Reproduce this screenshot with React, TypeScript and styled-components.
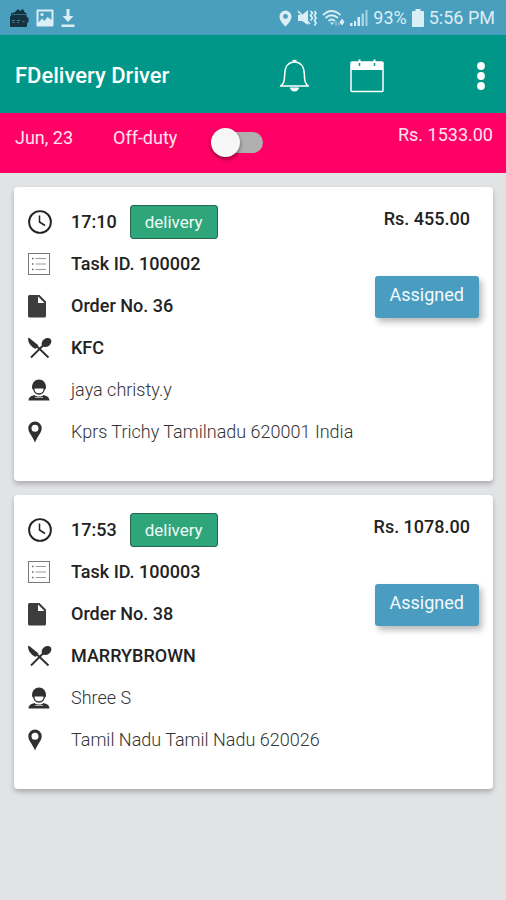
import React, { useState } from "react";
import styled, { createGlobalStyle } from "styled-components";

const GlobalStyle = createGlobalStyle`
  *, *::before, *::after { box-sizing: border-box; }
  html { background: #e2e3e5; }
  body { margin: 0; font-family: Roboto, "Liberation Sans", sans-serif; font-size: 18px; line-height: 24px; color: #222; }
  svg { display: block; flex: none; }
  button { font: inherit; border: 0; padding: 0; background: none; cursor: pointer; }
  h1, ul { margin: 0; padding: 0; }
`;

const Page = styled.div`
  display: flex;
  flex-direction: column;
  min-height: 100vh;
  background: #e2e3e5;
`;

const StatusBar = styled.div`
  display: flex;
  justify-content: space-between;
  align-items: center;
  height: 35px;
  padding: 1px 11px 0 9px;
  background: #4a9fbf;
  color: #dceef5;
`;

const StatusGroup = styled.div<{ $gap: number }>`
  display: flex;
  align-items: center;
  gap: ${(p) => p.$gap}px;
`;

const StatusText = styled.span`
  font-size: 18px;
  white-space: nowrap;
`;

const AppBar = styled.header`
  display: flex;
  align-items: center;
  height: 78px;
  padding: 4px 9px 0 15px;
  background: #009788;
  color: #fff;
`;

const Title = styled.h1`
  flex: 1;
  font-size: 22px;
  font-weight: 500;
  line-height: 28px;
`;

const Actions = styled.div`
  display: flex;
  align-items: center;
`;

const IconButton = styled.button<{ $after?: number }>`
  display: grid;
  place-items: center;
  height: 48px;
  margin-right: ${(p) => p.$after ?? 0}px;
  color: #fff;
`;

const DutyBar = styled.section`
  display: grid;
  grid-template-columns: 98px 98px 1fr auto;
  align-items: start;
  height: 60px;
  padding: 13px 13px 0 15px;
  background: #ff0066;
  color: #ffe3ee;
`;

const Earnings = styled.span`
  margin-top: -3px;
`;

const Switch = styled.input`
  appearance: none;
  position: relative;
  width: 52px;
  height: 30px;
  margin: 1px 0 0;
  cursor: pointer;

  &::before {
    content: "";
    position: absolute;
    inset: 5px 0 4px 4px;
    border-radius: 11px;
    background: #b0b0b0;
  }
  &::after {
    content: "";
    position: absolute;
    top: 1px;
    left: 0;
    width: 29px;
    height: 29px;
    border-radius: 50%;
    background: #f6f6f6;
    box-shadow: 0 2px 4px rgba(0, 0, 0, 0.45);
  }
  &:checked::after { left: 23px; }
`;

const TaskList = styled.main`
  display: flex;
  flex-direction: column;
  gap: 14px;
  padding: 14px 13px 14px 14px;
`;

const Card = styled.article`
  display: grid;
  grid-template-columns: 1fr auto;
  padding: 14px 14px 28px;
  border-radius: 4px;
  background: #fff;
  box-shadow: 0 3px 5px rgba(0, 0, 0, 0.24);
`;

const Rows = styled.ul`
  list-style: none;
  min-width: 0;
`;

const Row = styled.li<{ $light?: boolean }>`
  display: grid;
  grid-template-columns: 43px 1fr;
  align-items: center;
  min-height: 42px;
  color: ${(p) => (p.$light ? "#333" : "#222")};
  font-weight: ${(p) => (p.$light ? 300 : 500)};
`;

const TimeLine = styled.div`
  display: flex;
  align-items: center;
  gap: 13px;
`;

const Badge = styled.span`
  padding: 4px 14px;
  border: 1px solid #24664e;
  border-radius: 3px;
  background: #2fa57b;
  color: #eefaf5;
  font-size: 17px;
  font-weight: 400;
`;

const Side = styled.div`
  display: flex;
  flex-direction: column;
  align-items: flex-end;
  padding-top: 6px;
`;

const Price = styled.span`
  margin-right: 9px;
  font-weight: 500;
`;

const StatusButton = styled.button`
  && {
    margin-top: 45px;
    padding: 7px 15px 11px;
    border-radius: 3px;
    background: #4a9cc0;
    color: #f2fafd;
    box-shadow: 3px 4px 6px rgba(0, 0, 0, 0.28);
  }
`;

const StoreIcon = () => (
  <svg width="20" height="20" viewBox="0 0 20 20" fill="#14323f">
    <path d="M2 8V5.500L6 4l3-3 2 2 3-2 1.500 3 2 1.500V8z" />
    <path d="M3 6.500h14" stroke="#3c7f9c" strokeWidth=".8" />
    <rect x="1" y="8" width="17" height="11" rx="1" />
    <path d="M18 9.500h1.500v5H18z" />
    <path d="M3 12.500h3M8 12.500h3M3.500 14.500h2M8 14.500h2M13.500 13.500h2" stroke="#3c7f9c" />
  </svg>
);

const ImageIcon = () => (
  <svg width="18" height="18" viewBox="0 0 18 18" fill="#dceef5">
    <path fillRule="evenodd" d="M1.500.5h15a1 1 0 0 1 1 1v15a1 1 0 0 1-1 1h-15a1 1 0 0 1-1-1v-15a1 1 0 0 1 1-1zM2.500 2.500v11l3.500-4 2.500 2.500 3-4 4 3v-8.500z" />
    <circle cx="6" cy="5.500" r="1.600" />
  </svg>
);

const DownloadIcon = () => (
  <svg width="14" height="18" viewBox="0 0 14 18" fill="#dceef5">
    <path d="M5.500 0h3v7h4L7 13 1.500 7h4zM.5 15.500h13V18H.5z" />
  </svg>
);

const LocationIcon = () => (
  <svg width="13" height="17" viewBox="0 0 13 17" fill="#dceef5">
    <path fillRule="evenodd" d="M6.500.5a6 6 0 0 1 6 6c0 3.800-3.500 7.500-6 10-2.500-2.500-6-6.200-6-10a6 6 0 0 1 6-6zm0 3.500a2.400 2.400 0 1 0 0 4.800 2.400 2.400 0 0 0 0-4.800z" />
  </svg>
);

const MuteIcon = () => (
  <svg width="20" height="18" viewBox="0 0 20 18" fill="none" stroke="#dceef5">
    <path d="M1 6h4l6-5v15l-6-4H1z" fill="#dceef5" stroke="none" />
    <path d="M1 2l12 13" strokeWidth="1.500" />
    <path d="M13.500 2l2 2-2 2.500 2 2.500-2 2.500M17.500 2l1.500 2-1.500 2.500 1.500 2.500-1.500 2.500 1.500 2.500-1.500 2.500" strokeWidth="1.700" />
  </svg>
);

const WifiIcon = () => (
  <svg width="23" height="18" viewBox="0 0 23 18" fill="none" stroke="#dceef5">
    <path d="M1 6Q9.500-2 18.500 6" strokeWidth="1.800" />
    <path d="M3.500 9Q9.500 3.500 16 9" strokeWidth="1.800" />
    <path d="M6.500 12Q9.500 9 13 12" strokeWidth="1.800" />
    <path d="M8 13.500h4l-2 2.500z" fill="#dceef5" stroke="none" />
    <path d="M14 16.500v-4M17 16.500v-3" strokeWidth="1.200" opacity=".65" />
    <path d="M20 9.500l2.500 3.500-2.500 3.500-2.500-3.500z" fill="#dceef5" stroke="none" />
  </svg>
);

const SignalIcon = () => (
  <svg width="18" height="18" viewBox="0 0 18 18" fill="#dceef5">
    <path d="M0 14h2.500v3H0zM4 12h2v5H4zM7.500 8H10v9H7.500z" />
    <path d="M11.500 4.500H14V17h-2.500zM15.500 1h2v16h-2z" opacity=".65" />
  </svg>
);

const BatteryIcon = () => (
  <svg width="12" height="18" viewBox="0 0 12 18" fill="#dceef5">
    <path d="M3.500 0h5v2H11a1 1 0 0 1 1 1v14a1 1 0 0 1-1 1H1a1 1 0 0 1-1-1V3a1 1 0 0 1 1-1h2.500z" />
  </svg>
);

const BellIcon = () => (
  <svg width="31" height="34" viewBox="0 0 31 34" fill="none" stroke="currentColor" strokeWidth="1.500">
    <path d="M1.500 27h28c-3.500-2.500-4-5-4.200-12C25 7 21 3 15.500 3S6 7 5.700 15c-.2 7-.7 9.500-4.200 12z" strokeLinejoin="round" />
    <path d="M13 2.500a2.500 1.800 0 0 1 5 0zM11 28.500h9a4.500 4 0 0 1-9 0z" fill="currentColor" stroke="none" />
  </svg>
);

const CalendarIcon = () => (
  <svg width="34" height="34" viewBox="0 0 34 34" fill="none" stroke="currentColor" strokeWidth="1.500">
    <rect x="1" y="3" width="32" height="29.500" rx="1" />
    <path d="M1 3h32v8H1zM8.500.5h2V3h-2zM23.500.5h2V3h-2z" fill="currentColor" stroke="none" />
    <path d="M9.500 4v3M24.500 4v3" stroke="#009788" />
  </svg>
);

const MoreIcon = () => (
  <svg width="32" height="30" viewBox="0 0 32 30" fill="currentColor">
    <circle cx="16" cy="5" r="3.900" />
    <circle cx="16" cy="15" r="3.900" />
    <circle cx="16" cy="25" r="3.900" />
  </svg>
);

const ClockIcon = () => (
  <svg width="24" height="24" viewBox="0 0 24 24" fill="none" stroke="#222">
    <circle cx="12" cy="12" r="10.900" strokeWidth="1.900" />
    <path d="M11.500 5.500V12l5.500 3.500" strokeWidth="1.500" />
  </svg>
);

const ListIcon = () => (
  <svg width="22" height="22" viewBox="0 0 22 22" fill="none" stroke="#777">
    <rect x=".5" y=".5" width="21" height="21" />
    <path d="M7.500 5.500H18M7.500 11H18M7.500 16.500H18" stroke="#999" />
    <path d="M4 5.500h1.500M4 11h1.500M4 16.500h1.500" stroke="#666" strokeWidth="1.500" />
  </svg>
);

const FileIcon = () => (
  <svg width="18" height="23" viewBox="0 0 18 23" fill="#3d3d3d">
    <path fillRule="evenodd" d="M1.500 0h10L18 6.500V21a1.500 1.500 0 0 1-1.500 1.500h-15A1.500 1.500 0 0 1 0 21V1.500A1.500 1.500 0 0 1 1.500 0zM10 1.500V8h6.500z" />
  </svg>
);

const UtensilsIcon = () => (
  <svg width="24" height="22" viewBox="0 0 24 22" fill="#303030" stroke="#303030">
    <path d="M3 20.500 16 7.500M9 9.500l11.500 11" strokeWidth="1.900" fill="none" />
    <path d="M.8 1.500 9.500 8.500 7.500 11C3.500 9 .8 5.500.8 1.500z" strokeWidth="1.500" strokeLinejoin="round" />
    <ellipse cx="18.500" cy="5.500" rx="5.300" ry="4" transform="rotate(-38 18.500 5.500)" stroke="none" />
  </svg>
);

const PersonIcon = () => (
  <svg width="22" height="22" viewBox="0 0 22 22" fill="#303030">
    <path d="M4 8.500C4 3.500 7 .5 11 .5s7 3 7 8c0 1-.5 1.500-1 2H5c-.5-.5-1-1-1-2z" />
    <path d="M5.500 8c0 4.500 2.500 7 5.500 7s5.500-2.500 5.500-7" fill="none" stroke="#303030" strokeWidth="1.400" />
    <path d="M6.500 9.500h9c-.5 3-2.300 4.500-4.500 4.500s-4-1.500-4.500-4.500z" fill="#fff" />
    <path d="M.5 21.500c.3-3.500 2.500-4.500 6-5.500 2 2 7 2 9 0 3.500 1 5.700 2 6 5.500z" />
    <path d="M7 18.500h8" stroke="#aaa" />
  </svg>
);

const PinIcon = () => (
  <svg width="14" height="22" viewBox="0 0 14 22" fill="#303030">
    <path fillRule="evenodd" d="M7 .5A6.700 6.700 0 0 1 13.700 7.200C13.700 11.500 9.500 15 7 21.500 4.500 15 .3 11.500.3 7.200A6.700 6.700 0 0 1 7 .5zm0 3.200a3.500 3.500 0 1 0 0 7 3.500 3.500 0 0 0 0-7z" />
  </svg>
);

interface Task {
  time: string;
  kind: string;
  taskId: string;
  orderNo: string;
  restaurant: string;
  customer: string;
  address: string;
  price: string;
  status: string;
}

const tasks: Task[] = [
  {
    time: "17:10",
    kind: "delivery",
    taskId: "100002",
    orderNo: "36",
    restaurant: "KFC",
    customer: "jaya christy.y",
    address: "Kprs Trichy Tamilnadu 620001 India",
    price: "Rs. 455.00",
    status: "Assigned",
  },
  {
    time: "17:53",
    kind: "delivery",
    taskId: "100003",
    orderNo: "38",
    restaurant: "MARRYBROWN",
    customer: "Shree S",
    address: "Tamil Nadu Tamil Nadu 620026",
    price: "Rs. 1078.00",
    status: "Assigned",
  },
];

const TaskCard = ({ task }: { task: Task }) => (
  <Card>
    <Rows>
      <Row>
        <ClockIcon />
        <TimeLine>
          <span>{task.time}</span>
          <Badge>{task.kind}</Badge>
        </TimeLine>
      </Row>
      <Row><ListIcon /><span>Task ID. {task.taskId}</span></Row>
      <Row><FileIcon /><span>Order No. {task.orderNo}</span></Row>
      <Row><UtensilsIcon /><span>{task.restaurant}</span></Row>
      <Row $light><PersonIcon /><span>{task.customer}</span></Row>
      <Row $light><PinIcon /><span>{task.address}</span></Row>
    </Rows>
    <Side>
      <Price>{task.price}</Price>
      <StatusButton type="button">{task.status}</StatusButton>
    </Side>
  </Card>
);

export default function App() {
  const [onDuty, setOnDuty] = useState(false);

  return (
    <Page>
      <GlobalStyle />
      <StatusBar>
        <StatusGroup $gap={7}>
          <StoreIcon />
          <ImageIcon />
          <DownloadIcon />
        </StatusGroup>
        <StatusGroup $gap={5}>
          <LocationIcon />
          <MuteIcon />
          <WifiIcon />
          <SignalIcon />
          <StatusText>93%</StatusText>
          <BatteryIcon />
          <StatusText>5:56 PM</StatusText>
        </StatusGroup>
      </StatusBar>
      <AppBar>
        <Title>FDelivery Driver</Title>
        <Actions>
          <IconButton type="button" aria-label="Notifications" $after={40}><BellIcon /></IconButton>
          <IconButton type="button" aria-label="Calendar" $after={81}><CalendarIcon /></IconButton>
          <IconButton type="button" aria-label="More options"><MoreIcon /></IconButton>
        </Actions>
      </AppBar>
      <DutyBar>
        <span>Jun, 23</span>
        <label htmlFor="duty">Off-duty</label>
        <Switch
          id="duty"
          type="checkbox"
          role="switch"
          checked={onDuty}
          onChange={(e) => setOnDuty(e.target.checked)}
        />
        <Earnings>Rs. 1533.00</Earnings>
      </DutyBar>
      <TaskList>
        {tasks.map((task) => (
          <TaskCard key={task.taskId} task={task} />
        ))}
      </TaskList>
    </Page>
  );
}
